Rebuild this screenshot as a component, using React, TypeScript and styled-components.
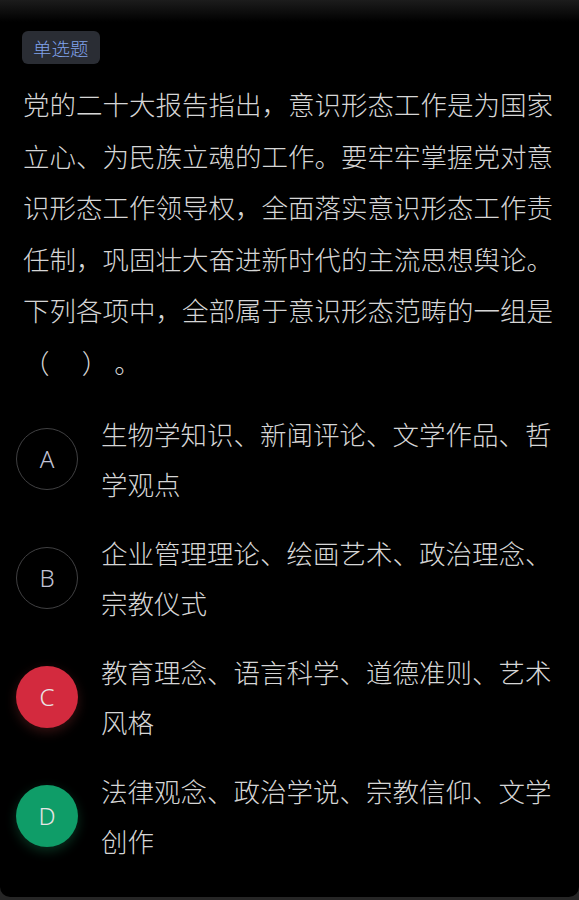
import { FunctionComponent } from "react"
import styled, { createGlobalStyle } from "styled-components"

const GlobalStyle = createGlobalStyle`
  html, body {
    margin: 0;
    padding: 0;
    background: #262626;
  }
  body {
    font-family: "Noto Sans CJK SC", "Noto Sans", sans-serif;
  }
`

type OptionState = "idle" | "wrong" | "right"

const options: { key: string; text: string; state: OptionState }[] = [
  { key: "A", text: "生物学知识、新闻评论、文学作品、哲学观点", state: "idle" },
  { key: "B", text: "企业管理理论、绘画艺术、政治理念、宗教仪式", state: "idle" },
  { key: "C", text: "教育理念、语言科学、道德准则、艺术风格", state: "wrong" },
  { key: "D", text: "法律观念、政治学说、宗教信仰、文学创作", state: "right" },
]

const App: FunctionComponent = () => {
  return (
    <>
      <GlobalStyle />
      <Page>
        <Tag>单选题</Tag>
        <Question>
          党的二十大报告指出，意识形态工作是为国家立心、为民族立魂的工作。要牢牢掌握党对意识形态工作领导权，全面落实意识形态工作责任制，巩固壮大奋进新时代的主流思想舆论。下列各项中，全部属于意识形态范畴的一组是（　 ） 。
        </Question>
        <OptionList>
          {options.map((o) => (
            <OptionRow key={o.key}>
              <Badge $state={o.state}>{o.key}</Badge>
              <OptionText>{o.text}</OptionText>
            </OptionRow>
          ))}
        </OptionList>
      </Page>
    </>
  )
}

const Page = styled.main`
  box-sizing: border-box;
  height: 897px;
  background: linear-gradient(to bottom, #1c1c1c 0px, #000 22px, #000 100%);
  border-radius: 0 0 10px 10px;
  padding: 31px 23px 0 23px;
  display: flex;
  flex-direction: column;
  align-items: flex-start;
`

const Tag = styled.div`
  box-sizing: border-box;
  height: 33px;
  padding: 0 11px;
  margin-left: -1px;
  display: flex;
  align-items: center;
  background: #2a2d34;
  border-radius: 6px;
  color: #80a3ec;
  font-size: 18.5px;
  font-weight: 300;
`

const Question = styled.p`
  margin: 14px 0 0 0;
  width: 533px;
  font-size: 26.5px;
  font-weight: 300;
  line-height: 51.6px;
  color: #d6d6d6;
`

const OptionList = styled.div`
  margin-top: 21px;
  display: flex;
  flex-direction: column;
  gap: 19px;
  margin-left: -7px;
`

const OptionRow = styled.div`
  display: flex;
  align-items: center;
  gap: 23px;
`

const badgeBg = {
  idle: "transparent",
  wrong: "#d32a3e",
  right: "#0f9d68",
}

const badgeShadow = {
  idle: "none",
  wrong: "0 4px 12px rgba(120, 40, 40, 0.45)",
  right: "0 4px 12px rgba(20, 110, 70, 0.45)",
}

const Badge = styled.div<{ $state: OptionState }>`
  box-sizing: border-box;
  flex: 0 0 62px;
  width: 62px;
  height: 62px;
  border-radius: 50%;
  display: flex;
  align-items: center;
  justify-content: center;
  font-family: "Noto Sans", "Roboto", sans-serif;
  font-size: 24px;
  font-weight: 300;
  color: ${(p) => (p.$state === "idle" ? "#c2c3d6" : "#e8e4e4")};
  background: ${(p) => badgeBg[p.$state]};
  border: 1px solid ${(p) => (p.$state === "idle" ? "#404042" : "transparent")};
  box-shadow: ${(p) => badgeShadow[p.$state]};
`

const OptionText = styled.div`
  width: 456px;
  font-size: 26.5px;
  font-weight: 300;
  line-height: 50px;
  color: #d6d6d6;
`

export default App
